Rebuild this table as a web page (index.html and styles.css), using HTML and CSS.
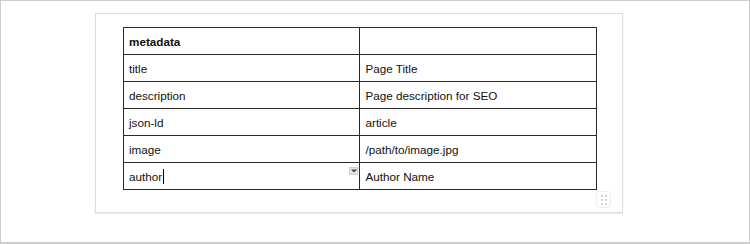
FILE: index.html
```html
<!DOCTYPE html>
<html>
<head>
<meta charset="utf-8">
<link rel="stylesheet" href="styles.css">
</head>
<body>
<div class="frame">
  <div class="card">
    <table class="meta">
      <tr><td class="key bold">metadata</td><td></td></tr>
      <tr><td>title</td><td>Page Title</td></tr>
      <tr><td>description</td><td>Page description for SEO</td></tr>
      <tr><td>json-ld</td><td>article</td></tr>
      <tr><td>image</td><td>/path/to/image.jpg</td></tr>
      <tr><td class="active">author<span class="caret"></span><span class="dropdown"><svg width="6" height="4" viewBox="0 0 6 4"><path d="M0 0.5h6L3 3.5z" fill="#444"/></svg></span></td><td>Author Name</td></tr>
    </table>
    <div class="handle-row">
      <div class="handle">
        <svg width="6" height="10" viewBox="0 0 6 10">
          <circle cx="1" cy="1" r="0.9" fill="#c4c4c4"/><circle cx="5" cy="1" r="0.9" fill="#c4c4c4"/>
          <circle cx="1" cy="5" r="0.9" fill="#c4c4c4"/><circle cx="5" cy="5" r="0.9" fill="#c4c4c4"/>
          <circle cx="1" cy="9" r="0.9" fill="#c4c4c4"/><circle cx="5" cy="9" r="0.9" fill="#c4c4c4"/>
        </svg>
      </div>
    </div>
  </div>
</div>
</body>
</html>
```
FILE: styles.css
```css
html, body {
  margin: 0;
  padding: 0;
  background: #fff;
}
.frame {
  box-sizing: border-box;
  width: 750px;
  height: 244px;
  border: 1px solid #cdcdcd;
  border-bottom-width: 2px;
  padding: 12px 0 0 94px;
}
.card {
  box-sizing: border-box;
  width: 528px;
  height: 200px;
  border: 1px solid #dcdcdc;
  box-shadow: 0 1px 1px rgba(0,0,0,0.08);
  padding: 13px 0 0 27px;
  background: #fff;
}
.meta {
  border-collapse: collapse;
  width: 474px;
  table-layout: fixed;
  font-family: "Liberation Sans", Arial, sans-serif;
  font-size: 11.7px;
  color: #111;
}
.meta td {
  border: 1px solid #2a2a2a;
  height: 27px;
  padding: 0 5px;
  box-sizing: border-box;
  vertical-align: middle;
  width: 50%;
}
.meta td:first-child {
  width: 236px;
}
.bold {
  font-weight: bold;
}
.active {
  position: relative;
}
.caret {
  display: inline-block;
  width: 1px;
  height: 15px;
  background: #000;
  vertical-align: -3px;
  margin-left: 1px;
}
.dropdown {
  position: absolute;
  right: 1px;
  top: 4px;
  box-sizing: border-box;
  width: 9px;
  height: 8px;
  background: #e6e6e6;
  border: 1px solid #cfcfcf;
  display: flex;
  align-items: center;
  justify-content: center;
}
.handle-row {
  display: flex;
  justify-content: flex-end;
  padding-right: 11px;
  margin-top: 1px;
}
.handle {
  box-sizing: border-box;
  width: 15px;
  height: 17px;
  border: 1px solid #efefef;
  border-radius: 3px;
  display: flex;
  align-items: center;
  justify-content: center;
}
```
